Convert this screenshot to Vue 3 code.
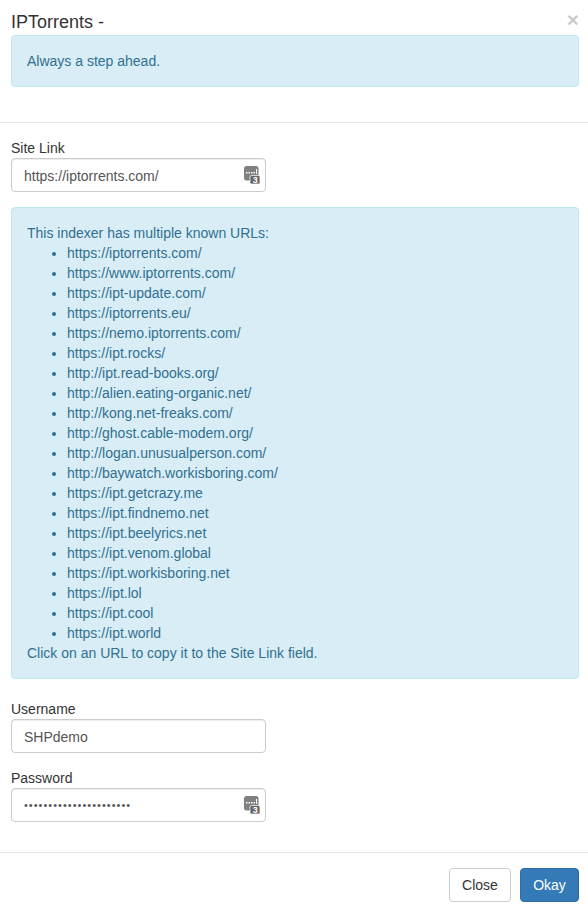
<script setup>
const urls = [
  'https://iptorrents.com/',
  'https://www.iptorrents.com/',
  'https://ipt-update.com/',
  'https://iptorrents.eu/',
  'https://nemo.iptorrents.com/',
  'https://ipt.rocks/',
  'http://ipt.read-books.org/',
  'http://alien.eating-organic.net/',
  'http://kong.net-freaks.com/',
  'http://ghost.cable-modem.org/',
  'http://logan.unusualperson.com/',
  'http://baywatch.workisboring.com/',
  'https://ipt.getcrazy.me',
  'https://ipt.findnemo.net',
  'https://ipt.beelyrics.net',
  'https://ipt.venom.global',
  'https://ipt.workisboring.net',
  'https://ipt.lol',
  'https://ipt.cool',
  'https://ipt.world'
]
</script>

<template>
  <div class="modal">
    <header class="head">
      <div class="title-row">
        <h4 class="title">IPTorrents -</h4>
        <button class="close" type="button">×</button>
      </div>
      <div class="alert">Always a step ahead.</div>
    </header>

    <section class="body">
      <div class="group">
        <label class="label">Site Link</label>
        <div class="field">
          <input class="input" type="text" value="https://iptorrents.com/" />
          <svg class="pm" viewBox="0 0 16 18" width="16" height="18">
            <rect x="0" y="0" width="14.5" height="14.5" rx="2.5" fill="#808080" />
            <g fill="#fff">
              <rect x="2" y="6" width="1.5" height="1.5" />
              <rect x="4.5" y="6" width="1.5" height="1.5" />
              <rect x="7" y="6" width="1.5" height="1.5" />
              <rect x="9.5" y="6" width="1.5" height="1.5" />
              <rect x="12" y="3" width="1" height="5" />
            </g>
            <rect x="6" y="9.5" width="10" height="8.5" rx="1.5" fill="#666" stroke="#fff" stroke-width="0.7" />
            <text x="11.2" y="16.6" text-anchor="middle" class="pm-num">3</text>
          </svg>
        </div>
      </div>

      <div class="alert urls">
        <div>This indexer has multiple known URLs:</div>
        <ul class="list">
          <li v-for="u in urls" :key="u"><a class="link" href="#">{{ u }}</a></li>
        </ul>
        <div>Click on an URL to copy it to the Site Link field.</div>
      </div>

      <div class="group">
        <label class="label">Username</label>
        <div class="field">
          <input class="input" type="text" value="SHPdemo" />
        </div>
      </div>

      <div class="group">
        <label class="label">Password</label>
        <div class="field">
          <input class="input secret" type="password" value="abcdefghijklmnopqrstuv" />
          <svg class="pm" viewBox="0 0 16 18" width="16" height="18">
            <rect x="0" y="0" width="14.5" height="14.5" rx="2.5" fill="#808080" />
            <g fill="#fff">
              <rect x="2" y="6" width="1.5" height="1.5" />
              <rect x="4.5" y="6" width="1.5" height="1.5" />
              <rect x="7" y="6" width="1.5" height="1.5" />
              <rect x="9.5" y="6" width="1.5" height="1.5" />
              <rect x="12" y="3" width="1" height="5" />
            </g>
            <rect x="6" y="9.5" width="10" height="8.5" rx="1.5" fill="#666" stroke="#fff" stroke-width="0.7" />
            <text x="11.2" y="16.6" text-anchor="middle" class="pm-num">3</text>
          </svg>
        </div>
      </div>
    </section>

    <footer class="foot">
      <button class="btn close-btn" type="button">Close</button>
      <button class="btn primary" type="button">Okay</button>
    </footer>
  </div>
</template>

<style>
body {
  margin: 0;
  background: #fff;
}
</style>

<style scoped>
.modal {
  width: 588px;
  height: 914px;
  box-sizing: border-box;
  font-family: "Liberation Sans", Arial, sans-serif;
  font-size: 14px;
  line-height: 20px;
  color: #333;
  background: #fff;
  overflow: hidden;
}
.head {
  padding: 9px 9px 15px 11px;
  border-bottom: 1px solid #e5e5e5;
}
.title-row {
  display: flex;
  justify-content: space-between;
  align-items: flex-start;
  height: 26px;
}
.title {
  margin: 0;
  font-size: 18px;
  line-height: 26px;
  font-weight: 500;
}
.close {
  margin: 0;
  padding: 0;
  border: 0;
  background: none;
  font-family: inherit;
  font-size: 21px;
  line-height: 1;
  font-weight: 700;
  color: #000;
  opacity: 0.2;
  text-shadow: 0 1px 0 #fff;
}
.alert {
  padding: 15px;
  margin-bottom: 20px;
  border: 1px solid #bce8f1;
  border-radius: 4px;
  background: #d9edf7;
  color: #31708f;
}
.list {
  margin: 0;
  padding-left: 40px;
}
.link {
  color: #31708f;
  text-decoration: none;
}
.body {
  padding: 15px 9px 15px 11px;
}
.group {
  margin-bottom: 15px;
}
.label {
  display: block;
  font-weight: 400;
}
.field {
  position: relative;
  width: 255px;
}
.input {
  display: block;
  width: 100%;
  height: 34px;
  box-sizing: border-box;
  padding: 7px 12px 5px;
  font-family: inherit;
  font-size: 14px;
  line-height: 20px;
  color: #555;
  background: #fff;
  border: 1px solid #ccc;
  border-radius: 4px;
  box-shadow: inset 0 1px 1px rgba(0, 0, 0, 0.075);
  outline: none;
}
.secret {
  padding: 6px 12px;
  font-size: 11px;
  letter-spacing: 1.02px;
}
.pm {
  position: absolute;
  top: 8px;
  right: 6px;
}
.pm-num {
  font-family: "Liberation Sans", Arial, sans-serif;
  font-size: 9px;
  font-weight: 700;
  fill: #fff;
}
.foot {
  display: flex;
  justify-content: flex-end;
  gap: 9px;
  padding: 15px 9px 15px 11px;
  border-top: 1px solid #e5e5e5;
}
.btn {
  height: 34px;
  box-sizing: border-box;
  padding: 6px 12px;
  font-family: inherit;
  font-size: 14px;
  line-height: 20px;
  color: #333;
  background: #fff;
  border: 1px solid #ccc;
  border-radius: 4px;
}
.close-btn {
  width: 62px;
}
.primary {
  width: 59px;
  color: #fff;
  background: #337ab7;
  border-color: #2e6da4;
}
</style>
